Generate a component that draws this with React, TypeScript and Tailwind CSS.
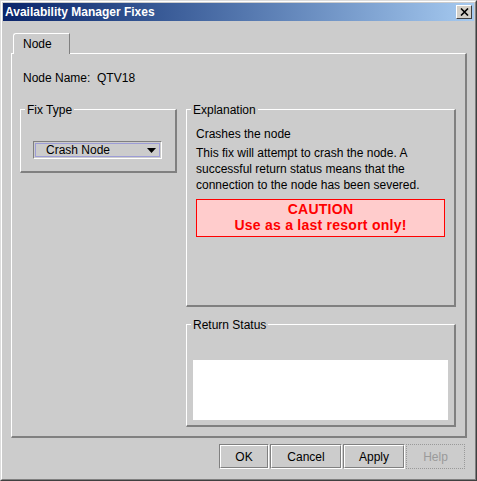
import React from "react";

const Group = ({
  title,
  className,
  children,
}: {
  title: string;
  className: string;
  children?: React.ReactNode;
}) => (
  <div
    className={
      "relative border-t border-l border-t-white border-l-white border-r-2 border-b-2 border-r-[#808080] border-b-[#808080] " +
      className
    }
  >
    <span className="absolute left-[4px] top-[-7px] bg-[#cccccc] px-[2px] leading-[14px] whitespace-nowrap">
      {title}
    </span>
    {children}
  </div>
);

const Btn = ({ label, w }: { label: string; w: string }) => (
  <div className={"h-[25px] border-t border-l border-t-[#808080] border-l-[#808080] border-r border-b border-r-white border-b-white " + w}>
    <div className="h-full border-t border-l border-t-white border-l-white border-r border-b border-r-[#808080] border-b-[#808080] flex items-center justify-center leading-[16px]">
      {label}
    </div>
  </div>
);

export default function App() {
  return (
    <div className="w-[477px] h-[481px] bg-[#cccccc] text-[12px] text-black font-['Liberation_Sans',Arial,sans-serif] border-t border-l border-t-[#dcdcdc] border-l-[#dcdcdc] border-r border-b border-r-[#404040] border-b-[#404040]">
      <div className="h-full flex flex-col p-[1px] border-t border-l border-t-white border-l-white border-r border-b border-r-[#808080] border-b-[#808080]">
        {/* Title bar */}
        <div className="h-[18px] flex items-center justify-between bg-linear-to-r from-[#0a246a] to-[#a6caf0] pl-[2px] pr-[2px]">
          <span className="text-white font-bold text-[12px] leading-[18px] whitespace-nowrap">
            Availability Manager Fixes
          </span>
          <div className="w-[16px] h-[14px] bg-[#d4d0c8] border-t border-l border-t-white border-l-white border-r border-b border-r-[#404040] border-b-[#404040] flex items-center justify-center">
            <svg width="9" height="8" viewBox="0 0 9 8">
              <path d="M1 0.5 L8 7.5 M8 0.5 L1 7.5" stroke="#000" strokeWidth="1.6" fill="none" />
            </svg>
          </div>
        </div>

        {/* Content */}
        <div className="flex flex-col pl-[8px] pt-[12px]">
          {/* Tab */}
          <div className="ml-[2px] w-[57px] h-[21px] -mb-[1px] relative z-10 bg-[#cccccc] border-t border-l border-t-white border-l-white border-r border-r-[#808080] rounded-tl-[3px] pl-[9px] pt-[2px] leading-[16px]">
            Node
          </div>
          {/* Panel */}
          <div className="w-[456px] h-[385px] border-t border-l border-t-white border-l-white border-r-2 border-b-2 border-r-[#808080] border-b-[#808080] pt-[16px]">
            <div className="pl-[11px] leading-[16px] whitespace-pre">Node Name:  QTV18</div>
            <div className="flex mt-[23px] pl-[8px]">
              <Group title="Fix Type" className="w-[157px] h-[64px] pl-[12px] pt-[31px]">
                <div className="w-[129px] h-[18px] p-[1px] border-t border-l border-t-[#808080] border-l-[#808080] border-r border-b border-r-white border-b-white">
                  <div className="h-full border border-[#9c9cd6] flex items-center justify-between pl-[10px] pr-[3px] leading-[14px]">
                    <span>Crash Node</span>
                    <svg width="9" height="5" viewBox="0 0 9 5">
                      <polygon points="0,0 9,0 4.5,5" fill="#000" />
                    </svg>
                  </div>
                </div>
              </Group>
              <Group title="Explanation" className="ml-[9px] w-[270px] h-[198px] pt-[16px] pl-[9px]">
                <div className="leading-[16px]">Crashes the node</div>
                <div className="mt-[3px] leading-[16px] w-[250px]">
                  This fix will attempt to crash the node. A successful return status means that the connection to the node has been severed.
                </div>
                <div className="mt-[6px] w-[249px] h-[38px] border border-[#ff0000] bg-[#ffcccc] text-[#ff0000] font-bold text-[14px] leading-[16px] text-center pt-[1px] tracking-[0.25px]">
                  <div>CAUTION</div>
                  <div>Use as a last resort only!</div>
                </div>
              </Group>
            </div>
            <Group title="Return Status" className="ml-[174px] mt-[17px] w-[270px] h-[103px] pt-[35px] pl-[6px]">
              <div className="w-[255px] h-[60px] bg-white" />
            </Group>
          </div>
          {/* Buttons */}
          <div className="w-[456px] mt-[6px] flex justify-end gap-[1px] pr-[2px]">
            <Btn label="OK" w="w-[50px]" />
            <Btn label="Cancel" w="w-[72px]" />
            <Btn label="Apply" w="w-[62px]" />
            <div className="w-[59px] h-[25px] border border-dotted border-[#999999] flex items-center justify-center text-[#9a9a9a] leading-[16px]">
              Help
            </div>
          </div>
        </div>
      </div>
    </div>
  );
}
